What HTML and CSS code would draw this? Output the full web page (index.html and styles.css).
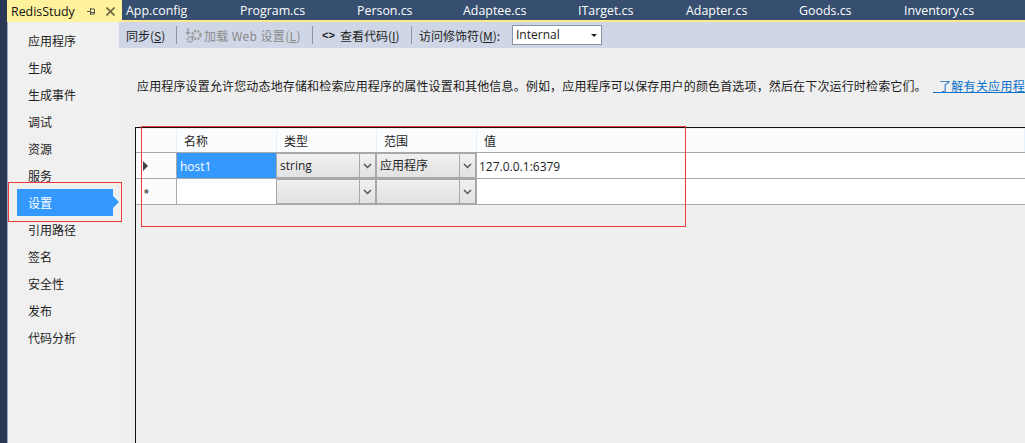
FILE: index.html
```html
<!DOCTYPE html>
<html lang="zh-CN">
<head>
<meta charset="utf-8">
<title>RedisStudy</title>
<link rel="stylesheet" href="styles.css">
</head>
<body>
<div class="tabs">
  <div class="tab-active">
    <span class="tab-active-name">RedisStudy</span>
    <svg class="pin" width="9" height="9" viewBox="0 0 9 9"><path d="M0 4.500H3M3.500 1V8M3.500 2H7.500V7H3.500M3.500 5.500H7.500" fill="none" stroke="#555" stroke-width="1"/></svg>
    <svg class="close" width="9" height="9" viewBox="0 0 9 9"><path d="M.5 .5L8.500 8.500M8.500 .5L.5 8.500" fill="none" stroke="#6b6440" stroke-width="1.600"/></svg>
  </div>
  <span class="tab t1">App.config</span>
  <span class="tab t2">Program.cs</span>
  <span class="tab t3">Person.cs</span>
  <span class="tab t4">Adaptee.cs</span>
  <span class="tab t5">ITarget.cs</span>
  <span class="tab t6">Adapter.cs</span>
  <span class="tab t7">Goods.cs</span>
  <span class="tab t8">Inventory.cs</span>
</div>
<div class="main">
  <nav class="side">
    <div class="nav">应用程序</div>
    <div class="nav">生成</div>
    <div class="nav">生成事件</div>
    <div class="nav">调试</div>
    <div class="nav">资源</div>
    <div class="nav">服务</div>
    <div class="nav nav-on">设置</div>
    <div class="nav">引用路径</div>
    <div class="nav">签名</div>
    <div class="nav">安全性</div>
    <div class="nav">发布</div>
    <div class="nav">代码分析</div>
    <div class="red-nav"></div>
  </nav>
  <section class="content">
    <div class="toolbar">
      <span class="tool tool-sync">同步(<u>S</u>)</span>
      <span class="sep"></span>
      <svg class="gear" width="19" height="17" viewBox="0 0 19 17"><g fill="none" stroke="#9a9a9a"><circle cx="12.500" cy="8" r="4" stroke-width="2.400" stroke-dasharray="2 1.200"/><circle cx="6" cy="12.500" r="2.500" stroke-width="1.800" stroke-dasharray="1.500 .8"/><path d="M4 1V7M2 5L4 7L6 5" stroke-width="1.400"/></g></svg>
      <span class="tool tool-off">加载 Web 设置(<u>L</u>)</span>
      <span class="sep"></span>
      <span class="code-icon">&lt;&gt;</span>
      <span class="tool tool-code">查看代码(<u>I</u>)</span>
      <span class="sep sep-last"></span>
      <span class="tool tool-access">访问修饰符(<u>M</u>):</span>
      <span class="combo">Internal<i class="caret"></i></span>
    </div>
    <div class="body">
      <p class="intro"><span class="intro-text">应用程序设置允许您动态地存储和检索应用程序的属性设置和其他信息。例如，应用程序可以保存用户的颜色首选项，然后在下次运行时检索它们。</span><a class="link">&nbsp;&nbsp;了解有关应用程</a></p>
      <div class="grid">
        <div class="row row-head">
          <div class="cell c0"></div>
          <div class="cell c1">名称</div>
          <div class="cell c2">类型</div>
          <div class="cell c3">范围</div>
          <div class="cell c4">值</div>
        </div>
        <div class="row">
          <div class="cell c0"><i class="marker"></i></div>
          <div class="cell c1 sel">host1</div>
          <div class="cell c2 dd"><span class="dd-text">string</span><span class="dd-btn"><svg width="9" height="6" viewBox="0 0 9 6"><path d="M1 1L4.500 4.500L8 1" fill="none" stroke="#555" stroke-width="1.500"/></svg></span></div>
          <div class="cell c3 dd"><span class="dd-text">应用程序</span><span class="dd-btn"><svg width="9" height="6" viewBox="0 0 9 6"><path d="M1 1L4.500 4.500L8 1" fill="none" stroke="#555" stroke-width="1.500"/></svg></span></div>
          <div class="cell c4 val">127.0.0.1:6379</div>
        </div>
        <div class="row">
          <div class="cell c0 star">*</div>
          <div class="cell c1"></div>
          <div class="cell c2 dd"><span class="dd-text"></span><span class="dd-btn"><svg width="9" height="6" viewBox="0 0 9 6"><path d="M1 1L4.500 4.500L8 1" fill="none" stroke="#555" stroke-width="1.500"/></svg></span></div>
          <div class="cell c3 dd"><span class="dd-text"></span><span class="dd-btn"><svg width="9" height="6" viewBox="0 0 9 6"><path d="M1 1L4.500 4.500L8 1" fill="none" stroke="#555" stroke-width="1.500"/></svg></span></div>
          <div class="cell c4"></div>
        </div>
        <div class="red-grid"></div>
      </div>
    </div>
  </section>
</div>
</body>
</html>
```
FILE: styles.css
```css
* { box-sizing: border-box; }
html, body { margin: 0; height: 443px; overflow: hidden; }
body { font-family: "Noto Sans CJK SC", "Noto Sans", sans-serif; font-size: 12px; color: #1e1e1e; background: #efefef; border-left: 7px solid #293955; }
.tabs { height: 22px; background: #364e6f; border-bottom: 2px solid #ffe88c; display: flex; position: relative; }
.tab-active { width: 115px; height: 22px; background: #fff29d; display: flex; align-items: center; flex: none; }
.tab-active-name { font-family: "Open Sans", sans-serif; font-size: 12.4px; color: #111; margin-left: 4px; width: 76px; flex: none; }
.close { margin-left: 10px; }
.tab { position: absolute; top: 2px; font-family: "Open Sans", sans-serif; font-size: 12.4px; line-height: 18px; color: #fff; }
.t1 { left: 119px; } .t2 { left: 233px; } .t3 { left: 350px; } .t4 { left: 456px; } .t5 { left: 571px; } .t6 { left: 679px; } .t7 { left: 792px; } .t8 { left: 897px; }
.main { display: flex; height: 421px; }
.side { width: 112px; flex: none; padding-top: 5px; position: relative; background: #f0f0f0; box-shadow: inset 1px 0 0 #9aa5b8; }
.nav { height: 27px; line-height: 27px; padding-left: 21px; font-size: 12px; color: #222; }
.nav-on { width: 96px; margin-left: 10px; padding-left: 11px; color: #fff; background: #3399ff; position: relative; }
.nav-on::after { content: ""; position: absolute; left: 96px; top: 7px; border-left: 6px solid #3399ff; border-top: 6px solid transparent; border-bottom: 6px solid transparent; }
.red-nav { position: absolute; left: 1px; top: 160px; width: 114px; height: 40px; border: 1px solid #f03a3a; }
.content { flex: 1; min-width: 0; display: flex; flex-direction: column; }
.toolbar { height: 26px; flex: none; background: #cfd6e5; display: flex; align-items: center; padding-left: 7px; white-space: nowrap; }
.tool { color: #1e1e1e; flex: none; }
.tool-sync { width: 50px; }
.tool-off { color: #8a8a8a; width: 108px; letter-spacing: 0.35px; }
.tool-code { width: 71px; }
.tool-access { width: 93px; }
.sep { width: 1px; height: 18px; background: #8a94a6; flex: none; }
.sep-last { margin-right: 7px; }
.gear { margin: 0 1px 0 7px; flex: none; }
.code-icon { font-family: "Liberation Sans", sans-serif; font-weight: bold; font-size: 11px; margin-left: 9px; width: 18px; flex: none; }
.combo { width: 90px; height: 20px; flex: none; background: #fff; border: 1px solid #8a94a6; padding-left: 3px; line-height: 18px; font-family: "Open Sans", sans-serif; position: relative; }
.caret { position: absolute; right: 4px; top: 8px; border-top: 3px solid #222; border-left: 3px solid transparent; border-right: 3px solid transparent; }
.body { flex: 1; min-height: 0; padding-top: 29px; display: flex; flex-direction: column; background: #efefef; }
.intro { margin: 0 0 0 18px; height: 50px; flex: none; display: flex; line-height: 17px; white-space: nowrap; font-size: 12px; color: #1a1a1a; }
.intro-text { width: 796px; flex: none; letter-spacing: 0.15px; }
.link { color: #0a70c8; text-decoration: underline; flex: none; letter-spacing: 0.3px; }
.grid { flex: 1; margin-left: 16px; border-left: 1px solid #111; border-top: 1px solid #111; position: relative; }
.row { display: flex; height: 26px; background: #fff; border-bottom: 1px solid #a8a8a8; }
.row-head { height: 24px; margin-top: 1px; background: #fbfcfe; }
.cell { height: 100%; flex: none; display: flex; align-items: center; border-right: 1px solid #a8a8a8; }
.c0 { width: 41px; background: #fbfcfe; }
.c1 { width: 100px; padding-left: 3px; }
.c2, .c3 { width: 100px; }
.c4 { flex: 1; border-right: 0; padding-left: 2px; }
.row-head .cell { padding-left: 7px; border-right: 1px solid #e6f0fb; }
.sel { background: #3399ff; color: #fff; font-family: "Open Sans", sans-serif; padding-top: 1px; }
.val { font-family: "Open Sans", sans-serif; padding-top: 1px; }
.dd { border: 1px solid #a8a8a8; border-width: 1px 2px 1px 0; background: linear-gradient(#f0f0f0, #e2e2e2); }
.dd-text { flex: 1; height: 100%; line-height: 24px; padding-left: 3px; font-family: "Open Sans", "Noto Sans CJK SC", sans-serif; }
.dd-btn { width: 16px; height: 100%; border-left: 1px solid #a8a8a8; display: flex; align-items: center; justify-content: center; flex: none; }
.marker { margin-left: 7px; border-left: 5px solid #444; border-top: 5px solid transparent; border-bottom: 5px solid transparent; }
.star { padding: 4px 0 0 8px; font-family: "Liberation Sans", sans-serif; font-size: 12px; font-weight: bold; color: #555; }
.red-grid { position: absolute; left: 5px; top: -2px; width: 545px; height: 101px; border: 1px solid #f03a3a; pointer-events: none; }
```
